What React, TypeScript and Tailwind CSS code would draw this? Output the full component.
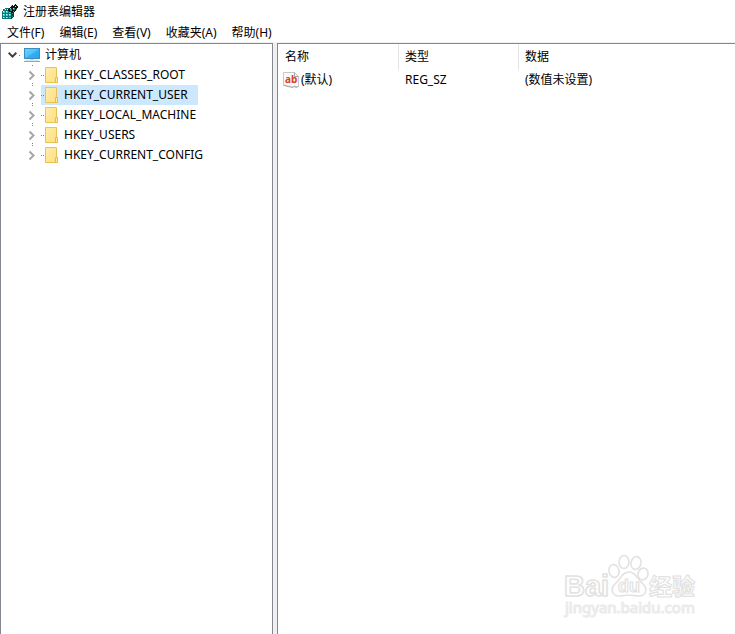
import React, { useState } from 'react';

const menus = ['文件(F)', '编辑(E)', '查看(V)', '收藏夹(A)', '帮助(H)'];

const hives = [
  'HKEY_CLASSES_ROOT',
  'HKEY_CURRENT_USER',
  'HKEY_LOCAL_MACHINE',
  'HKEY_USERS',
  'HKEY_CURRENT_CONFIG',
];

const values = [{ name: '(默认)', type: 'REG_SZ', data: '(数值未设置)' }];

function RegistryIcon() {
  return (
    <svg width="16" height="16" viewBox="0 0 16 16" aria-hidden="true" shapeRendering="crispEdges">
      <path d="M0 7h1V5h2V4h5v2h4v7h-1v1h-1v1H0z" fill="#087878" />
      <path d="M1 7h2v2H1zM4 7h2v2H4zM7 8h2v1H7zM1 10h2v2H1zM4 10h2v2H4zM7 10h2v2H7zM1 13h2v1H1zM4 13h2v1H4zM7 13h2v1H7z" fill="#35cccc" />
      <path d="M3 5h1v1H3zM5 5h1v1H5zM1 7h1v1H1zM4 7h1v1H4zM1 10h1v1H1zM4 10h1v1H4zM7 10h1v1H7zM1 13h1v1H1zM4 13h1v1H4z" fill="#d2ffff" />
      <path d="M9 8h3v5h-1v1h-1v1H9z" fill="#0b3d3d" />
      <path d="M10 9h1v1h-1zM10 12h1v1h-1z" fill="#128c8c" />
      <path d="M6 5h1V4h1V3h1V2h1V1h1v1h1V1h1V0h1v1h1v1h1v2h-1v1h-1v2h-1v1h-1v1H9V8H7V7H6z" fill="#151515" />
      <path d="M8 5h2v2H8zM11 4h2v2h-2z" fill="#128a8a" />
      <path d="M9 1h1v1H9zM8 4h1v1H8zM11 4h1v1h-1zM13 2h1v1h-1z" fill="#b8dede" />
      <path d="M11 7h1v1h-1zM14 5h1v1h-1z" fill="#888" />
    </svg>
  );
}

function ComputerIcon() {
  return (
    <svg width="16" height="16" viewBox="0 0 16 16" aria-hidden="true">
      <defs>
        <linearGradient id="screen" x1="0" y1="0" x2="1" y2="1">
          <stop offset="0" stopColor="#6fd4ff" />
          <stop offset="0.5" stopColor="#4fc0fa" />
          <stop offset="0.5" stopColor="#36aff3" />
          <stop offset="1" stopColor="#2ba2ea" />
        </linearGradient>
      </defs>
      <rect x="0.5" y="1.5" width="15" height="10" fill="url(#screen)" stroke="#3a8fbc" />
      <path d="M6 12h4v1H6z" fill="#c8d8e0" />
      <path d="M1 13h14v1H1z" fill="#dbe6ec" />
      <path d="M0 14h16v1H0z" fill="#8fa9b8" />
    </svg>
  );
}

function FolderIcon() {
  return (
    <svg width="13" height="16" viewBox="0 0 13 16" aria-hidden="true">
      <defs>
        <linearGradient id="folder" x1="0" y1="0" x2="1" y2="1">
          <stop offset="0" stopColor="#ffedaa" />
          <stop offset="1" stopColor="#ffdf80" />
        </linearGradient>
      </defs>
      <path d="M0.5 0.5h11v10h1v5h-12z" fill="url(#folder)" stroke="#e8c252" />
      <path d="M10.5 15.5v-5h2v5z" fill="#ffeaa0" stroke="#e8bd40" />
    </svg>
  );
}

function StringValueIcon() {
  return (
    <svg width="16" height="16" viewBox="0 0 16 16" aria-hidden="true">
      <path d="M0.5 0.5h11l4 4v10l-2 .5-2-.8-2 1-2-1H5l-2-.7-2.500-.5z" fill="#fafafa" stroke="#c8c8c8" />
      <path d="M11.500.5v4h4M.5 13.500l2.500.3 2 .9h2l2 .8 2-1 2 .8 2-.8" fill="none" stroke="#a4a4a4" />
      <text x="2" y="11" fontSize="10" fontWeight="bold" fontFamily="'Noto Sans', sans-serif" fill="#d8421c">
        ab
      </text>
    </svg>
  );
}

function Chevron() {
  return (
    <svg width="9" height="6" viewBox="0 0 9 6" aria-hidden="true">
      <path d="M0.700.8l3.800 3.800L8.300.8" fill="none" stroke="#404040" strokeWidth="2" />
    </svg>
  );
}

function Connector() {
  return (
    <svg width="4" height="20" viewBox="0 0 4 20" aria-hidden="true">
      <path d="M0 10h1v1H0zM2 10h1v1H2z" fill="#808080" />
    </svg>
  );
}

function Branch({ last }: { last: boolean }) {
  return (
    <svg width="10" height="20" viewBox="0 0 10 20" aria-hidden="true">
      <path d="M4 0h1v1H4z" fill="#808080" />
      {!last && <path d="M4 18h1v1H4z" fill="#808080" />}
      <path d="M1.500 6.500l4 4-4 4" fill="none" stroke="#a6a6a6" strokeWidth="2" />
    </svg>
  );
}

function Watermark() {
  return (
    <svg width="150" height="70" viewBox="0 0 150 70" role="img" aria-label="Baidu 经验">
      <g fill="#fff" stroke="#e2e2e2" strokeWidth="1.6" strokeLinejoin="round">
        <text x="4" y="43" fontSize="29" fontWeight="bold" fontFamily="'Liberation Sans', sans-serif">
          Bai
        </text>
        <ellipse cx="54" cy="18" rx="5" ry="6.500" transform="rotate(-15 54 18)" />
        <ellipse cx="64" cy="9" rx="5" ry="6.500" />
        <ellipse cx="76" cy="10" rx="5" ry="6.500" transform="rotate(12 76 10)" />
        <ellipse cx="83" cy="21" rx="5" ry="6" transform="rotate(15 83 21)" />
        <path d="M69 19c7 0 8 7 14 12 5 5 3 12-4 12-4 0-6-1-10-1s-6 1-10 1c-7 0-9-7-4-12 6-5 7-12 14-12z" />
        <text x="58" y="39" fontSize="18" fontWeight="bold" fontFamily="'Liberation Sans', sans-serif" strokeWidth="1.2">
          du
        </text>
        <text x="89" y="42" fontSize="23" fontWeight="bold" fontFamily="'Noto Sans CJK SC', sans-serif" strokeWidth="1.2">
          经验
        </text>
        <text x="5" y="60" fontSize="15" fontFamily="'Noto Sans', sans-serif" strokeWidth="1.2" stroke="#ebebeb">
          jingyan.baidu.com
        </text>
      </g>
    </svg>
  );
}

export default function App() {
  const [selected, setSelected] = useState('HKEY_CURRENT_USER');

  return (
    <div className="relative flex h-screen flex-col overflow-hidden bg-white font-['Noto_Sans','Noto_Sans_CJK_SC',sans-serif] text-xs leading-5 text-black">
      <header className="flex h-6 items-center gap-1 pl-0.5">
        <RegistryIcon />
        <h1 className="pl-px">注册表编辑器</h1>
      </header>

      <nav className="flex h-[18px] items-center gap-[15px] pl-[7px]">
        {menus.map((menu) => (
          <button key={menu} type="button" className="whitespace-nowrap">
            {menu}
          </button>
        ))}
      </nav>

      <main className="flex min-h-0 flex-1 gap-1 bg-[#f0f0f0] pt-px">
        <section aria-label="注册表项" className="w-[273px] shrink-0 border border-b-0 border-[#828790] bg-white pt-px">
          <div className="flex h-5 items-center pl-[7px]">
            <Chevron />
            <span className="w-1 pl-px">
              <svg width="2" height="2" viewBox="0 0 2 2" aria-hidden="true">
                <path d="M1 1h1v1H1z" fill="#808080" />
              </svg>
            </span>
            <span className="flex items-center gap-1 pl-[3px]">
              <ComputerIcon />
              <span className="pl-px">计算机</span>
            </span>
          </div>
          <ul>
            {hives.map((hive, index) => (
              <li key={hive} className="flex h-5 pl-[27px]">
                <Branch last={index === hives.length - 1} />
                <button
                  type="button"
                  aria-pressed={hive === selected}
                  onClick={() => setSelected(hive)}
                  className={`ml-[3px] flex items-center whitespace-nowrap pr-2.5 ${hive === selected ? 'bg-[#cce8ff]' : ''}`}
                >
                  <Connector />
                  <FolderIcon />
                  <span className="pl-1.5">{hive}</span>
                </button>
              </li>
            ))}
          </ul>
        </section>

        <section aria-label="值" className="min-w-0 flex-1 border-t border-l border-[#828790] bg-white">
          <table className="w-full table-fixed border-separate border-spacing-0 text-left">
            <thead>
              <tr className="h-[26px]">
                <th className="w-[121px] border-r border-[#e5e5e5] p-0 pl-[7px] font-normal">名称</th>
                <th className="w-[120px] border-r border-[#e5e5e5] p-0 pl-1.5 font-normal">类型</th>
                <th className="p-0 pl-1.5 font-normal">数据</th>
              </tr>
            </thead>
            <tbody>
              {values.map((value) => (
                <tr key={value.name} className="h-5">
                  <td className="p-0 pl-[5px]">
                    <span className="flex items-center gap-0.5">
                      <StringValueIcon />
                      {value.name}
                    </span>
                  </td>
                  <td className="p-0 pl-1.5">{value.type}</td>
                  <td className="p-0 pl-1.5">{value.data}</td>
                </tr>
              ))}
            </tbody>
          </table>
        </section>
      </main>

      <div className="pointer-events-none absolute right-[25px] bottom-[11px]">
        <Watermark />
      </div>
    </div>
  );
}
